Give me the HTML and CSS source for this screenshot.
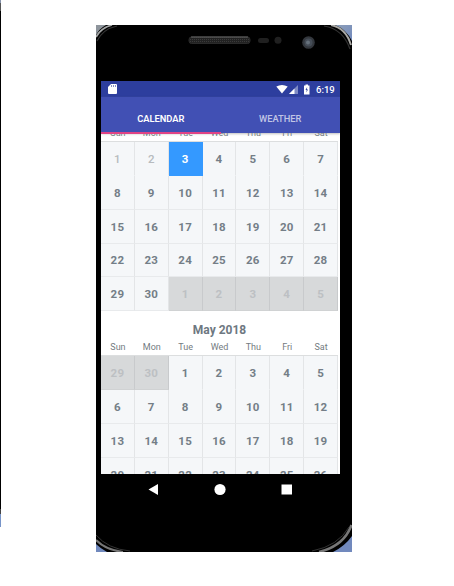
FILE: index.html
```
<!DOCTYPE html>
<html lang="en">
<head>
<meta charset="utf-8">
<title>Calendar</title>
<link rel="stylesheet" href="styles.css">
</head>
<body>
<div class="edge"></div>
<main class="phone">
  <svg class="frame" viewBox="0 0 256 527" aria-hidden="true">
    <defs>
      <linearGradient id="corner" x1="0" y1="0" x2="1" y2="1"><stop offset="0" stop-color="#8fa0b8"/><stop offset="1" stop-color="#7189bd"/></linearGradient>
      <pattern id="mesh" width="2" height="2" patternUnits="userSpaceOnUse"><rect width="2" height="2" fill="#222"/><rect width="1" height="1" fill="#3b3b3b"/></pattern>
    </defs>
    <rect width="256" height="527" fill="#000"/>
    <path d="M0 0H10Q3 4 0 10Z" fill="#8e959c"/>
    <path d="M0 12Q5 3 16 0" fill="none" stroke="#a4a6a6" stroke-width="1.8"/>
    <path d="M1 16Q7 4 21 1" fill="none" stroke="#343434" stroke-width="1.2"/>
    <path d="M256 0H239Q250 4 256 16Z" fill="url(#corner)"/>
    <path d="M235 0Q250 3 255 20" fill="none" stroke="#aaa9a5" stroke-width="2"/>
    <path d="M228 1Q247 4 254 24" fill="none" stroke="#333" stroke-width="1.2"/>
    <path d="M0 519Q4 523 11 527H0Z" fill="#7189bd"/>
    <path d="M0 515Q10 525 27 527" fill="none" stroke="#777" stroke-width="2"/>
    <path d="M0 510Q12 524 34 526" fill="none" stroke="#333" stroke-width="1"/>
    <path d="M256 511Q249 521 237 527H256Z" fill="#7189bd"/>
    <path d="M255.500 500Q248 521 223 527" fill="none" stroke="#777" stroke-width="2.500"/>
    <path d="M253 502Q242 521 216 526" fill="none" stroke="#333" stroke-width="1"/>
    <rect x="93" y="12" width="61" height="6.500" rx="2.500" fill="url(#mesh)" stroke="#2a2a2a"/>
    <path d="M95 12H152" stroke="#666"/>
    <rect x="162" y="13" width="11" height="5" rx="2.500" fill="#202020"/>
    <circle cx="182" cy="15.200" r="3.500" fill="#202020"/>
    <circle cx="212.500" cy="17.500" r="6.300" fill="#33373d"/><circle cx="212.500" cy="17.500" r="4" fill="#454d57"/><circle cx="212" cy="17.500" r="2" fill="#66717c"/>
  </svg>
  <section class="screen">
    <header class="status">
      <svg class="sd" viewBox="0 0 9 10"><path d="M3 0H8Q9 0 9 1V9Q9 10 8 10H1Q0 10 0 9V3Z" fill="#fff"/><path d="M3.500 1V3M5.500 1V3M7.500 1V3" stroke="#6674b4" stroke-width=".8"/></svg>
      <svg class="signals" viewBox="0 0 36 11"><path d="M.3 2.600Q6 -.8 11.700 2.600L6 9.500Z" fill="#fff"/><path d="M22 1V10H13Z" fill="#7f8bc5"/><path d="M18.500 4.500V10H13Z" fill="#fff"/><path d="M28 1.500H29.500V.5H32V1.500H33.500V10.500H28Z" fill="#fff"/><path d="M31.200 3L29.500 6H30.700L30.300 8.500L32 5.400H30.900Z" fill="#2c3e9e"/></svg>
      <span class="time">6:19</span>
    </header>
    <nav class="tabs"><a class="tab active">CALENDAR</a><a class="tab">WEATHER</a></nav>
    <div class="calendar">
      <div class="weekdays first"><span>Sun</span><span>Mon</span><span>Tue</span><span>Wed</span><span>Thu</span><span>Fri</span><span>Sat</span></div>
      <div class="grid">
        <b class="past">1</b><b class="past">2</b><b class="selected">3</b><b>4</b><b>5</b><b>6</b><b>7</b>
        <b>8</b><b>9</b><b>10</b><b>11</b><b>12</b><b>13</b><b>14</b>
        <b>15</b><b>16</b><b>17</b><b>18</b><b>19</b><b>20</b><b>21</b>
        <b>22</b><b>23</b><b>24</b><b>25</b><b>26</b><b>27</b><b>28</b>
        <b>29</b><b>30</b><b class="other">1</b><b class="other">2</b><b class="other">3</b><b class="other">4</b><b class="other">5</b>
      </div>
      <h2>May 2018</h2>
      <div class="weekdays"><span>Sun</span><span>Mon</span><span>Tue</span><span>Wed</span><span>Thu</span><span>Fri</span><span>Sat</span></div>
      <div class="grid">
        <b class="other">29</b><b class="other">30</b><b>1</b><b>2</b><b>3</b><b>4</b><b>5</b>
        <b>6</b><b>7</b><b>8</b><b>9</b><b>10</b><b>11</b><b>12</b>
        <b>13</b><b>14</b><b>15</b><b>16</b><b>17</b><b>18</b><b>19</b>
        <b>20</b><b>21</b><b>22</b><b>23</b><b>24</b><b>25</b><b>26</b>
      </div>
    </div>
  </section>
  <footer class="navigation">
    <svg viewBox="0 0 239 32"><path d="M47.500 15.500L57 10V21Z" fill="#fff"/><circle cx="119" cy="15.500" r="5.600" fill="#fff"/><rect x="180.500" y="10.500" width="10.500" height="10" fill="#fff"/></svg>
  </footer>
</main>
</body>
</html>
```
FILE: styles.css
```
* { box-sizing: border-box; }
body { margin: 0; width: 454px; height: 586px; overflow: hidden; display: flex; background: #fff; font-family: Roboto, sans-serif; }
.edge { width: 1px; height: 527px; margin-right: 95px; background: linear-gradient(#8793ac 0 3px, #555 3px 11px, #000 11px 509px, #444 509px 514px, #7794c8 514px); }
.phone { position: relative; width: 256px; height: 527px; margin-top: 25px; padding: 56px 12px 0 5px; }
.frame { position: absolute; inset: 0; width: 256px; height: 527px; }
.screen { position: relative; width: 239px; height: 393px; background: #fff; overflow: hidden; }
.status { height: 16px; background: #2d3e9e; display: flex; align-items: center; padding: 0 5px 0 7px; color: #fff; }
.sd { width: 9px; height: 10px; }
.signals { width: 36px; height: 11px; margin-left: auto; }
.time { font-size: 9.500px; font-weight: 500; line-height: 16px; padding-top: 1px; width: 19px; margin-left: 4px; white-space: nowrap; }
.tabs { position: relative; z-index: 1; height: 36px; display: flex; background: #4150b4; box-shadow: 0 1px 2px #8888; }
.tab { flex: 1; display: flex; align-items: center; justify-content: center; padding-top: 8px; font-size: 9.300px; font-weight: 500; color: #c1c6e5; border-bottom: 1px solid transparent; }
.tab.active { color: #fff; font-weight: 600; border-bottom: 2px solid #e04386; margin-bottom: -1px; }
.calendar { width: 237px; }
.weekdays { display: grid; grid-template-columns: repeat(7, 1fr); height: 15px; line-height: 15px; text-align: center; font-size: 9px; color: #747b81; }
.weekdays.first { margin-top: -7px; }
.grid { display: grid; grid-template-columns: repeat(7, 1fr); grid-auto-rows: 33.850px; border-top: 1px solid #dcdedf; }
.grid b { display: flex; align-items: center; justify-content: center; padding-top: 1px; font-size: 11.500px; font-weight: 700; letter-spacing: .2px; color: #747e87; background: #f5f7f9; border-right: 1px solid #e3e5e7; border-bottom: 1px solid #e8eaec; }
.grid b:nth-child(-n+7) { border-bottom-color: #f5f7f9; }
.grid b.past { color: #b7bbbe; font-weight: 500; }
.grid b.selected { background: #3499ff; color: #fff; border-color: #3499ff; }
.grid b.other { background: #d7d9da; color: #bdc0c3; border-color: #c8cacc #c8cacc #d0d2d3; }
h2 { height: 29px; margin: 0; padding-top: 9px; text-align: center; font-size: 12px; line-height: 20px; font-weight: 700; color: #6e7881; }
.navigation { position: relative; width: 239px; height: 32px; }
.navigation svg { display: block; width: 239px; height: 32px; }
```
